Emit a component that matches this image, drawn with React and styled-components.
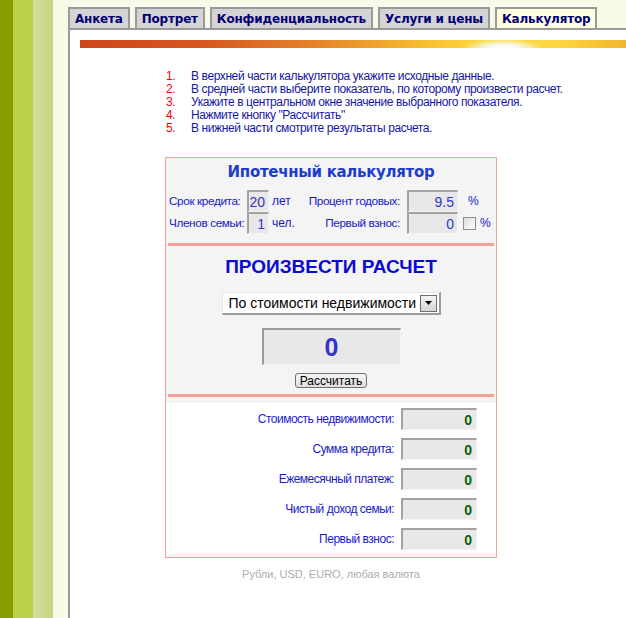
import React from "react";
import styled, { createGlobalStyle } from "styled-components";

const GlobalStyle = createGlobalStyle`
  html, body {
    margin: 0;
    padding: 0;
    background: #fff;
  }
  body {
    font-family: "Liberation Sans", Arial, sans-serif;
  }
`;

const tabs = ["Анкета", "Портрет", "Конфиденциальность", "Услуги и цены", "Калькулятор"];

const steps = [
  "В верхней части калькулятора укажите исходные данные.",
  "В средней части выберите показатель, по которому произвести расчет.",
  "Укажите в центральном окне значение выбранного показателя.",
  "Нажмите кнопку \"Рассчитать\"",
  "В нижней части смотрите результаты расчета.",
];

const results = [
  "Стоимость недвижимости:",
  "Сумма кредита:",
  "Ежемесячный платеж:",
  "Чистый доход семьи:",
  "Первый взнос:",
];

const App = () => {
  return (
    <>
      <GlobalStyle />
      <Page>
        <Rail />
        <Main>
          <TabBar>
            {tabs.map((t, i) => (
              <Tab key={t} active={i === tabs.length - 1}>
                {t}
              </Tab>
            ))}
          </TabBar>
          <Content>
            <SunBar />
            <Body>
              <Steps>
                {steps.map((s, i) => (
                  <Step key={i}>
                    <StepNum>{i + 1}.</StepNum>
                    <span>{s}</span>
                  </Step>
                ))}
              </Steps>

              <Calc>
                <Title>Ипотечный калькулятор</Title>
                <Params>
                  <Label>Срок кредита:</Label>
                  <Cell>
                    <Field readOnly value="20" w={22} />
                  </Cell>
                  <Unit>лет</Unit>
                  <Label right>Процент годовых:</Label>
                  <Cell>
                    <Field readOnly value="9.5" w={51} />
                  </Cell>
                  <Unit pad={10}>%</Unit>

                  <Label>Членов семьи:</Label>
                  <Cell>
                    <Field readOnly value="1" w={22} />
                  </Cell>
                  <Unit>чел.</Unit>
                  <Label right>Первый взнос:</Label>
                  <Cell>
                    <Field readOnly value="0" w={51} />
                  </Cell>
                  <Unit pad={5}>
                    <Check />
                    <span>%</span>
                  </Unit>
                </Params>

                <Divider gap={9} />

                <Middle>
                  <Heading>ПРОИЗВЕСТИ РАСЧЕТ</Heading>
                  <Select>
                    <span>По стоимости недвижимости</span>
                    <SelectArrow>
                      <svg width="7" height="4" viewBox="0 0 7 4">
                        <path d="M0 0h7L3.5 4z" fill="#000" />
                      </svg>
                    </SelectArrow>
                  </Select>
                  <Display>0</Display>
                  <CalcButton>Рассчитать</CalcButton>
                </Middle>

                <Divider gap={6} />

                <Results>
                  {results.map((r) => (
                    <ResultRow key={r}>
                      <ResultLabel>{r}</ResultLabel>
                      <ResultValue>0</ResultValue>
                    </ResultRow>
                  ))}
                </Results>
              </Calc>

              <Note>Рубли, USD, EURO, любая валюта</Note>
            </Body>
          </Content>
        </Main>
      </Page>
    </>
  );
};

const Page = styled.div`
  display: flex;
  min-height: 100vh;
  background: #f8fae8;
`;

const Rail = styled.div`
  width: 68px;
  flex-shrink: 0;
  background: linear-gradient(
    to right,
    #889c00 0 13px,
    #bdd04a 13px 33px,
    #d5df9f 33px,
    #c6d47e 53px,
    #f8fae8 53px 68px
  );
`;

const Main = styled.div`
  flex: 1;
  display: flex;
  flex-direction: column;
  min-width: 0;
`;

const TabBar = styled.div`
  height: 28px;
  box-sizing: border-box;
  padding-top: 7px;
  display: flex;
  gap: 5px;
  align-items: stretch;
`;

const Tab = styled.div`
  box-sizing: border-box;
  border: 2px solid #9a9a9a;
  border-bottom: none;
  padding: 0 5px;
  display: flex;
  align-items: center;
  background: ${(p) => (p.active ? "#ffffe2" : "#d4d4d4")};
  color: #000070;
  font-family: "DejaVu Sans", Verdana, sans-serif;
  font-weight: bold;
  font-size: 12px;
  letter-spacing: -0.2px;
  white-space: nowrap;
`;

const Content = styled.div`
  flex: 1;
  background: #fff;
  border-left: 2px solid #9a9a9a;
  border-top: 2px solid #9a9a9a;
  padding: 10px 0 0 10px;
`;

const SunBar = styled.div`
  height: 8px;
  background:
    radial-gradient(ellipse 40px 9px at 423px 100%, #ffffff 0%, #f4f8f0 40%, rgba(255, 255, 255, 0) 100%),
    linear-gradient(
      to right,
      #cf461a 0px,
      #d6561e 120px,
      #e27c28 220px,
      #f0a42c 300px,
      #f8c232 350px,
      #fddc40 410px,
      #fbd640 480px,
      #f4b42c 546px
    );
`;

const Body = styled.div`
  margin-left: 85px;
  width: 332px;
`;

const Steps = styled.ol`
  list-style: none;
  margin: 22px 0 0;
  padding: 0;
  width: 420px;
`;

const Step = styled.li`
  display: flex;
  font-size: 12px;
  letter-spacing: -0.4px;
  line-height: 13px;
  color: #1616a6;
`;

const StepNum = styled.span`
  width: 25px;
  padding-left: 1px;
  color: #f00000;
`;

const Calc = styled.div`
  box-sizing: border-box;
  width: 332px;
  margin-top: 22px;
  border: 1px solid #f5a198;
  background: #f4f4f4;
  padding-bottom: 3px;
`;

const Title = styled.div`
  padding-top: 4px;
  line-height: 20px;
  text-align: center;
  font-family: "DejaVu Sans", Verdana, sans-serif;
  font-weight: bold;
  font-size: 15px;
  letter-spacing: -0.3px;
  color: #1e3ccc;
`;

const Params = styled.div`
  margin-top: 8px;
  padding: 0 2px;
  display: grid;
  grid-template-columns: 78px 23px 34px 103px 52px 36px;
  grid-auto-rows: 22px;
`;

const Label = styled.div`
  display: flex;
  align-items: center;
  justify-content: ${(p) => (p.right ? "flex-end" : "flex-start")};
  padding: ${(p) => (p.right ? "0 6px 0 0" : "0 0 0 1px")};
  font-size: 11.8px;
  letter-spacing: -0.4px;
  color: #1818c8;
  white-space: nowrap;
`;

const Cell = styled.div`
  display: flex;
  align-items: stretch;
  justify-content: flex-end;
`;

const Field = styled.input`
  box-sizing: border-box;
  width: ${(p) => p.w}px;
  height: 22px;
  margin: 0;
  padding: 0 3px 0 0;
  border-style: solid;
  border-width: 2px 1px 1px 2px;
  border-color: #a2a2a2 #f2f2f2 #f2f2f2 #a2a2a2;
  background: #e8e8e8;
  text-align: right;
  font-family: "Liberation Sans", Arial, sans-serif;
  font-size: 14px;
  color: #3434c8;
  outline: none;
`;

const Unit = styled.div`
  display: flex;
  align-items: center;
  gap: 4px;
  padding-left: ${(p) => (p.pad !== undefined ? p.pad : 3)}px;
  font-size: 12px;
  color: #1818c8;
`;

const Check = styled.span`
  display: inline-block;
  box-sizing: border-box;
  width: 13px;
  height: 13px;
  border: 1px solid #8c8c8c;
  background: linear-gradient(135deg, #dcdcdc, #ffffff);
`;

const Divider = styled.div`
  height: 3px;
  margin: ${(p) => p.gap}px 2px 0;
  background: #f5a198;
`;

const Middle = styled.div`
  display: flex;
  flex-direction: column;
  align-items: center;
`;

const Heading = styled.div`
  margin-top: 11px;
  line-height: 20px;
  font-weight: bold;
  font-size: 19px;
  color: #0a0ad0;
`;

const Select = styled.div`
  box-sizing: border-box;
  margin-top: 15px;
  width: 219px;
  height: 23px;
  display: flex;
  align-items: center;
  justify-content: space-between;
  padding: 0 2px 0 6px;
  background: #fff;
  border-style: solid;
  border-width: 1px 2px 2px 1px;
  border-color: #e4e4e4 #9c9c9c #9c9c9c #e4e4e4;
  font-size: 14px;
  color: #000;
`;

const SelectArrow = styled.span`
  box-sizing: border-box;
  width: 17px;
  height: 17px;
  display: flex;
  align-items: center;
  justify-content: center;
  border: 1px solid #6e6e6e;
  background: linear-gradient(#f4f4f4, #d6d6d6);
`;

const Display = styled.div`
  box-sizing: border-box;
  margin-top: 13px;
  width: 139px;
  height: 37px;
  display: flex;
  align-items: center;
  justify-content: center;
  background: #e8e8e8;
  border-style: solid;
  border-width: 2px 1px 1px 2px;
  border-color: #9a9a9a #f2f2f2 #f2f2f2 #9a9a9a;
  font-weight: bold;
  font-size: 25px;
  color: #3434cc;
`;

const CalcButton = styled.button`
  box-sizing: border-box;
  margin-top: 8px;
  width: 72px;
  height: 15px;
  padding: 0;
  border: 1px solid #707070;
  border-radius: 3px;
  background: linear-gradient(#f6f6f6, #dedede);
  font-family: "Liberation Sans", Arial, sans-serif;
  font-size: 12px;
  line-height: 12px;
  color: #000;
`;

const Results = styled.div`
  margin-top: 6px;
  padding: 5px 19px 4px 0;
  background: #fff;
  display: flex;
  flex-direction: column;
  gap: 8px;
`;

const ResultRow = styled.div`
  display: grid;
  grid-template-columns: 1fr 76px;
  column-gap: 7px;
  height: 22px;
`;

const ResultLabel = styled.div`
  display: flex;
  align-items: center;
  justify-content: flex-end;
  font-size: 12px;
  letter-spacing: -0.5px;
  color: #1a1acc;
`;

const ResultValue = styled.div`
  box-sizing: border-box;
  display: flex;
  align-items: center;
  justify-content: flex-end;
  padding-right: 4px;
  background: #e8e8e8;
  border-style: solid;
  border-width: 2px 1px 1px 2px;
  border-color: #a2a2a2 #f2f2f2 #f2f2f2 #a2a2a2;
  font-weight: bold;
  font-size: 14px;
  color: #0a640a;
`;

const Note = styled.div`
  margin-top: 9px;
  text-align: center;
  font-size: 11px;
  line-height: 14px;
  color: #adadad;
`;

export default App;
